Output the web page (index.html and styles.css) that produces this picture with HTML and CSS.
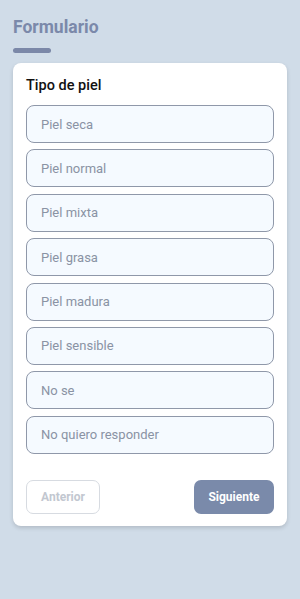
FILE: index.html
```html
<!DOCTYPE html>
<html lang="es">
<head>
    <meta charset="UTF-8">
    <meta name="viewport" content="width=device-width, initial-scale=1.0">
    <title>Formulario</title>
    <link rel="stylesheet" href="styles.css">
</head>
<body>
    <div class="page">
        <h1 class="title">Formulario</h1>
        <div class="title-bar"></div>
        <div class="card">
            <h2 class="question">Tipo de piel</h2>
            <div class="options">
                <div class="option">Piel seca</div>
                <div class="option">Piel normal</div>
                <div class="option">Piel mixta</div>
                <div class="option">Piel grasa</div>
                <div class="option">Piel madura</div>
                <div class="option">Piel sensible</div>
                <div class="option">No se</div>
                <div class="option">No quiero responder</div>
            </div>
            <div class="actions">
                <button class="btn btn-prev" disabled>Anterior</button>
                <button class="btn btn-next">Siguiente</button>
            </div>
        </div>
    </div>
</body>
</html>
```

FILE: styles.css
```css
html, body { margin: 0; padding: 0; }
body { font-family: Roboto, "Liberation Sans", sans-serif; background-color: #d0dce8; min-height: 599px; }
.page { padding: 16px 13px 20px; }
.title { margin: 0; font-size: 17.5px; font-weight: 700; color: #7b89aa; line-height: 22px; }
.title-bar { width: 38px; height: 5px; border-radius: 3px; background-color: #7b88a8; margin-top: 10px; }
.card { background: white; margin-top: 10px; border-radius: 8px; padding: 14px 13px 12px; box-shadow: 0 2px 4px rgba(0,0,0,0.15); }
.question { margin: 0 0 10px; font-size: 14.5px; font-weight: 500; color: #111; line-height: 18px; }
.options { display: flex; flex-direction: column; gap: 6.4px; }
.option { height: 36px; display: flex; align-items: center; padding: 0 14px; border: 1px solid #8f98a9; border-radius: 8px; background-color: #f5faff; color: #8a93a4; font-size: 13px; }
.actions { display: flex; justify-content: space-between; margin-top: 26px; }
.btn { font-family: inherit; font-size: 12px; font-weight: 700; height: 34px; border-radius: 7px; cursor: pointer; }
.btn-prev { width: 74px; background: white; border: 1px solid #d7dbe1; color: #c2c7d0; }
.btn-next { width: 80px; background-color: #7a8aaa; border: none; color: white; }
```
